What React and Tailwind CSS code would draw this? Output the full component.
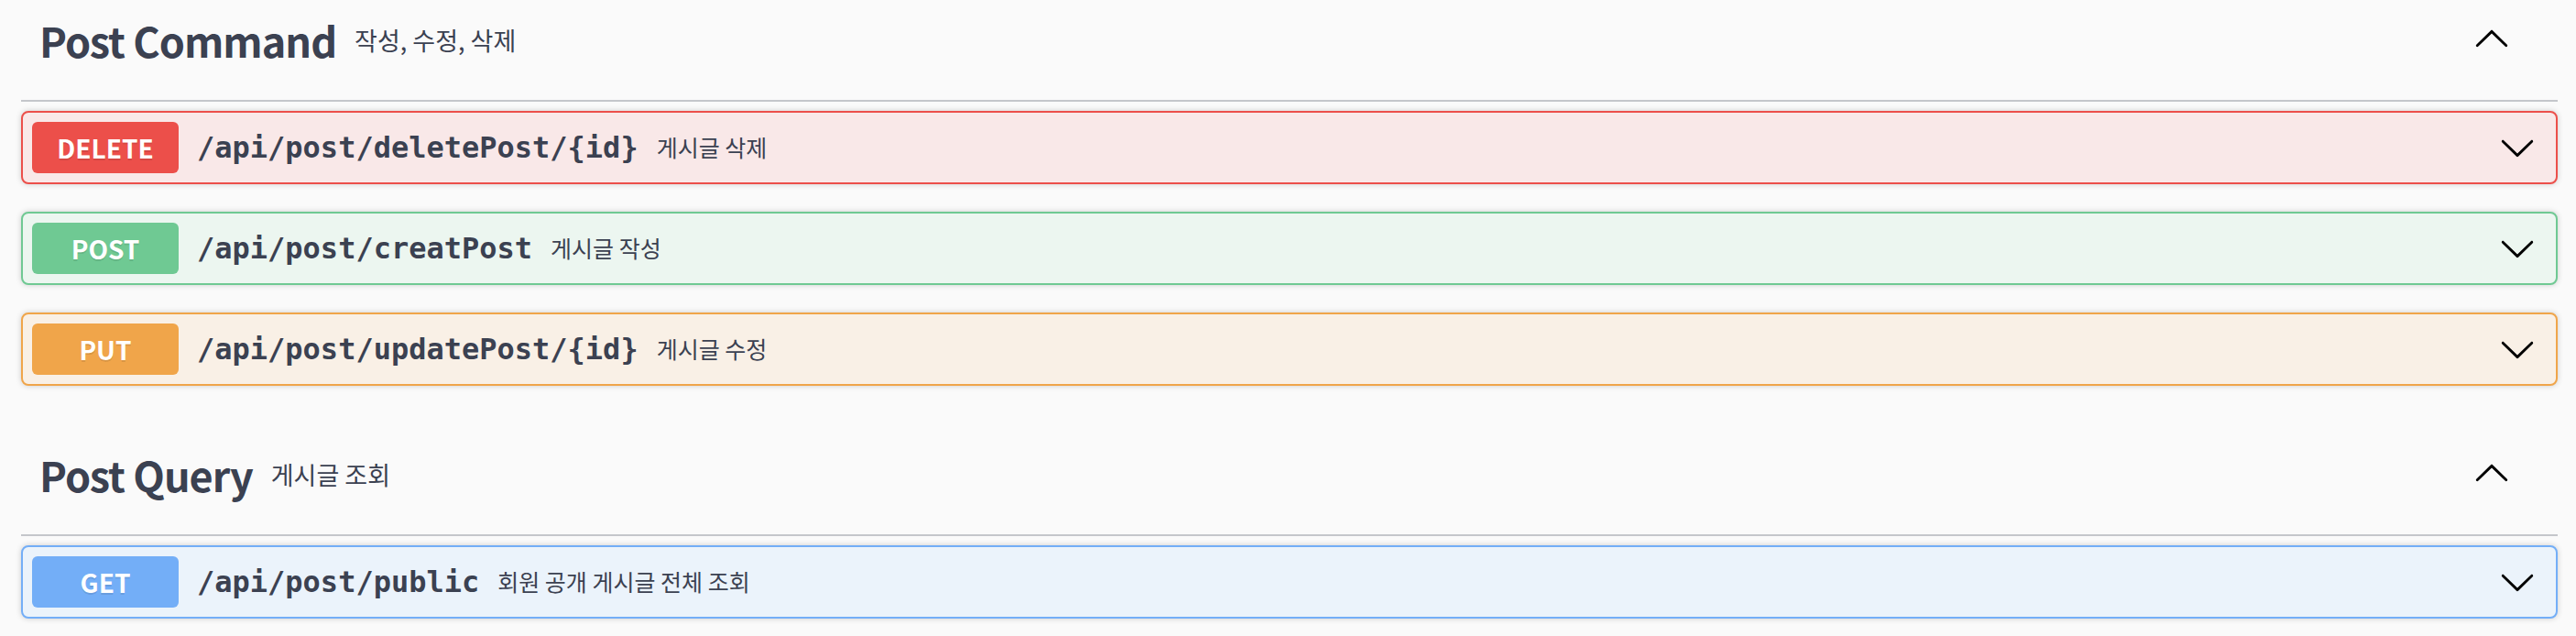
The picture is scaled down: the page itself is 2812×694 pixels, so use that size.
import React from 'react';

const SANS = { fontFamily: '"Noto Sans CJK KR", "Noto Sans", sans-serif' };

// method colour tokens
const METHODS = {
  DELETE: { badge: 'bg-[#ec4f4a]', row: 'bg-[#f9e8e8] border-[#ec4f4a]' },
  POST: { badge: 'bg-[#6fc993]', row: 'bg-[#ecf6f0] border-[#6fc993]' },
  PUT: { badge: 'bg-[#f0a54a]', row: 'bg-[#f9f0e6] border-[#f0a54a]' },
  GET: { badge: 'bg-[#73aef7]', row: 'bg-[#ebf3fb] border-[#73aef7]' },
};

const Arrow = ({ up }) => (
  <svg width="40" height="40" viewBox="0 0 20 20" className={up ? 'rotate-180' : ''} fill="#000">
    <path d="M17.418 6.109c.272-.268.709-.268.979 0s.271.701 0 .969l-7.908 7.83c-.27.268-.707.268-.979 0l-7.908-7.83c-.27-.268-.27-.701 0-.969.271-.268.709-.268.979 0L10 13.25l7.418-7.141z" />
  </svg>
);

const TagHeader = ({ title, desc, first }) => (
  <div
    className={`flex items-center h-[134px] pl-[20px] pr-[52px] border-b-2 border-[#c4c6cb] mb-[10px] ${first ? '-mt-[23px]' : ''}`}
  >
    <span className="text-[45px] font-semibold tracking-[-1px] text-[#3b4151] leading-none" style={SANS}>{title}</span>
    <span className="flex-1 px-[20px] text-[27px] text-[#3b4151] leading-none" style={SANS}>{desc}</span>
    <Arrow up />
  </div>
);

const Operation = ({ method, path, desc }) => {
  const m = METHODS[method];
  return (
    <div className={`flex items-center p-[10px] mb-[30px] border-2 rounded-[8px] shadow-[0_0_6px_rgba(0,0,0,0.19)] ${m.row}`}>
      <div
        className={`w-[160px] h-[56px] flex items-center justify-center rounded-[6px] text-white text-[28px] font-bold [text-shadow:0_2px_0_rgba(0,0,0,0.1)] ${m.badge}`}
        style={SANS}
      >
        {method}
      </div>
      <span
        className="px-[20px] text-[32px] font-bold text-[#3b4151]"
        style={{ fontFamily: '"DejaVu Sans Mono", "Liberation Mono", monospace' }}
      >
        {path}
      </span>
      <span className="flex-1 text-[25px] text-[#3b4151]" style={SANS}>{desc}</span>
      <div className="mr-[12px] flex items-center">
        <Arrow />
      </div>
    </div>
  );
};

export default function App() {
  return (
    <div className="w-[2812px] h-[694px] overflow-hidden bg-[#fafafa] pl-[23px] pr-[20px]">
      <TagHeader first title="Post Command" desc="작성, 수정, 삭제" />
      <Operation method="DELETE" path="/api/post/deletePost/{id}" desc="게시글 삭제" />
      <Operation method="POST" path="/api/post/creatPost" desc="게시글 작성" />
      <Operation method="PUT" path="/api/post/updatePost/{id}" desc="게시글 수정" />

      <TagHeader title="Post Query" desc="게시글 조회" />
      <Operation method="GET" path="/api/post/public" desc="회원 공개 게시글 전체 조회" />
    </div>
  );
}
